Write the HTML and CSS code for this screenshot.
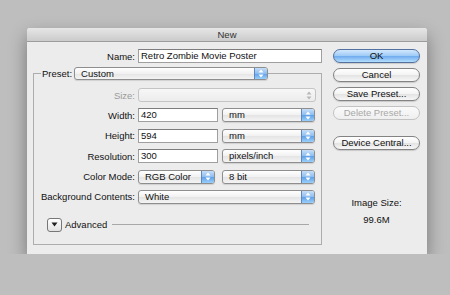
FILE: index.html
```html
<!DOCTYPE html>
<html lang="en">
<head>
    <meta charset="UTF-8">
    <meta name="viewport" content="width=device-width, initial-scale=1.0">
    <title>New</title>
    <link rel="stylesheet" href="styles.css">
</head>
<body>
    <div class="dialog">
        <div class="titlebar">New</div>
        <div class="content">
            <div class="main">
                <div class="row">
                    <span class="lbl">Name:</span>
                    <div class="field w-name">Retro Zombie Movie Poster</div>
                </div>

                <div class="group">
                    <div class="group-head">
                        <span class="head-lbl">Preset:</span>
                        <div class="popup w-preset">
                            <span class="val">Custom</span>
                            <span class="arrows"><svg width="6" height="9" viewBox="0 0 6 9"><path d="M3 0.5 L5.5 3.5 H0.5 Z M3 8.5 L5.5 5.5 H0.5 Z" fill="#fff"/></svg></span>
                        </div>
                    </div>

                    <div class="rows">
                        <div class="row">
                            <span class="lbl dim">Size:</span>
                            <div class="popup disabled w-size">
                                <span class="val"></span>
                                <span class="arrows"><svg width="6" height="9" viewBox="0 0 6 9"><path d="M3 0.5 L5.5 3.5 H0.5 Z M3 8.5 L5.5 5.5 H0.5 Z" fill="#b8b8b8"/></svg></span>
                            </div>
                        </div>
                        <div class="row">
                            <span class="lbl">Width:</span>
                            <div class="field w-num">420</div>
                            <div class="popup w-unit">
                                <span class="val">mm</span>
                                <span class="arrows"><svg width="6" height="9" viewBox="0 0 6 9"><path d="M3 0.5 L5.5 3.5 H0.5 Z M3 8.5 L5.5 5.5 H0.5 Z" fill="#fff"/></svg></span>
                            </div>
                        </div>
                        <div class="row">
                            <span class="lbl">Height:</span>
                            <div class="field w-num">594</div>
                            <div class="popup w-unit">
                                <span class="val">mm</span>
                                <span class="arrows"><svg width="6" height="9" viewBox="0 0 6 9"><path d="M3 0.5 L5.5 3.5 H0.5 Z M3 8.5 L5.5 5.5 H0.5 Z" fill="#fff"/></svg></span>
                            </div>
                        </div>
                        <div class="row">
                            <span class="lbl">Resolution:</span>
                            <div class="field w-num">300</div>
                            <div class="popup w-unit">
                                <span class="val">pixels/inch</span>
                                <span class="arrows"><svg width="6" height="9" viewBox="0 0 6 9"><path d="M3 0.5 L5.5 3.5 H0.5 Z M3 8.5 L5.5 5.5 H0.5 Z" fill="#fff"/></svg></span>
                            </div>
                        </div>
                        <div class="row">
                            <span class="lbl">Color Mode:</span>
                            <div class="popup w-mode">
                                <span class="val">RGB Color</span>
                                <span class="arrows"><svg width="6" height="9" viewBox="0 0 6 9"><path d="M3 0.5 L5.5 3.5 H0.5 Z M3 8.5 L5.5 5.5 H0.5 Z" fill="#fff"/></svg></span>
                            </div>
                            <div class="popup w-unit">
                                <span class="val">8 bit</span>
                                <span class="arrows"><svg width="6" height="9" viewBox="0 0 6 9"><path d="M3 0.5 L5.5 3.5 H0.5 Z M3 8.5 L5.5 5.5 H0.5 Z" fill="#fff"/></svg></span>
                            </div>
                        </div>
                        <div class="row">
                            <span class="lbl">Background Contents:</span>
                            <div class="popup w-bg">
                                <span class="val">White</span>
                                <span class="arrows"><svg width="6" height="9" viewBox="0 0 6 9"><path d="M3 0.5 L5.5 3.5 H0.5 Z M3 8.5 L5.5 5.5 H0.5 Z" fill="#fff"/></svg></span>
                            </div>
                        </div>
                    </div>

                    <div class="advanced">
                        <span class="disclose"><svg width="7" height="5" viewBox="0 0 7 5"><path d="M0.5 0.5 H6.5 L3.5 4.5 Z" fill="#222"/></svg></span>
                        <span class="adv-lbl">Advanced</span>
                        <span class="adv-line"></span>
                    </div>
                </div>
            </div>

            <div class="side">
                <div class="btn default">OK</div>
                <div class="btn">Cancel</div>
                <div class="btn">Save Preset...</div>
                <div class="btn disabled">Delete Preset...</div>
                <div class="btn gap">Device Central...</div>
                <div class="imgsize">
                    <p>Image Size:</p>
                    <p>99.6M</p>
                </div>
            </div>
        </div>
    </div>
</body>
</html>
```

FILE: styles.css
```css
body {
    margin: 0;
    background-color: #bebebe;
    font-family: "Liberation Sans", Arial, sans-serif;
    font-size: 9.5px;
    color: #111;
}
.dialog {
    width: 400px;
    height: 226px;
    margin: 28px 0 0 27px;
    background-color: #ececec;
    box-shadow: 0 8px 18px rgba(0, 0, 0, 0.38);
    border-radius: 3px 3px 0 0;
}
.titlebar {
    height: 13px;
    line-height: 13px;
    text-align: center;
    background: linear-gradient(#e6e6e6, #cbcbcb);
    border-bottom: 1px solid #9c9c9c;
    border-radius: 3px 3px 0 0;
    color: #333;
}
.content {
    display: flex;
    padding: 7px 0 0 6px;
}
.main {
    width: 289px;
}
.row {
    display: flex;
    align-items: center;
    height: 14px;
}
.lbl {
    width: 102px;
    text-align: right;
    margin-right: 3px;
    white-space: nowrap;
}
.group .lbl {
    width: 101px;
}
.dim {
    color: #9a9a9a;
}
.field {
    box-sizing: border-box;
    height: 14px;
    line-height: 12px;
    padding-left: 2px;
    background-color: #fff;
    border: 1px solid #9f9f9f;
    border-top-color: #7d7d7d;
}
.w-name { width: 184px; }
.w-num { width: 80px; margin-right: 4px; }

.popup {
    box-sizing: border-box;
    display: flex;
    height: 14px;
    border: 1px solid #8e8e8e;
    border-radius: 3px;
    background: linear-gradient(#ffffff, #f1f1f1 50%, #e4e4e4 51%, #f4f4f4);
    box-shadow: 0 1px 1px rgba(0, 0, 0, 0.12);
}
.popup .val {
    flex: 1;
    line-height: 12px;
    padding-left: 6px;
}
.popup .arrows {
    width: 12px;
    display: flex;
    align-items: center;
    justify-content: center;
    border-left: 1px solid #5f86bf;
    border-radius: 0 2px 2px 0;
    background: linear-gradient(#c6def8, #8cbdf1 50%, #5e9fe6 51%, #9ad0fb);
}
.popup.disabled {
    border-color: #c4c4c4;
    background: linear-gradient(#f7f7f7, #ececec);
    box-shadow: none;
}
.popup.disabled .arrows {
    background: none;
    border-left: none;
}
.w-preset { width: 194px; height: 13px; }
.w-preset .val { line-height: 11px; }
.w-size { width: 178px; }
.w-unit { width: 93px; }
.w-mode { width: 77px; margin-right: 7px; }
.w-bg { width: 177px; }

.group {
    margin-top: 10px;
    height: 172px;
    border: 1px solid #adadad;
    box-sizing: border-box;
}
.group-head {
    display: flex;
    align-items: center;
    width: fit-content;
    height: 13px;
    margin: -7px 0 0 7px;
    padding: 0 0 0 1px;
    background-color: #ececec;
}
.head-lbl {
    margin-right: 2px;
}
.rows {
    display: flex;
    flex-direction: column;
    gap: 6.4px;
    margin-top: 8px;
}
.advanced {
    display: flex;
    align-items: center;
    margin: 14px 0 0 13px;
    height: 14px;
}
.disclose {
    box-sizing: border-box;
    width: 15px;
    height: 14px;
    display: flex;
    align-items: center;
    justify-content: center;
    border: 1px solid #777;
    border-radius: 3px;
    background: linear-gradient(#ffffff, #e2e2e2);
}
.adv-lbl {
    margin-left: 3px;
}
.adv-line {
    width: 197px;
    height: 1px;
    margin-left: 5px;
    background-color: #a8a8a8;
}

.side {
    margin-left: 11px;
    width: 87px;
    display: flex;
    flex-direction: column;
    gap: 5px;
}
.btn {
    box-sizing: border-box;
    height: 14px;
    line-height: 12px;
    text-align: center;
    border: 1px solid #838383;
    border-radius: 7px;
    background: linear-gradient(#ffffff, #f3f3f3 50%, #e3e3e3 51%, #f7f7f7);
    box-shadow: 0 1px 1px rgba(0, 0, 0, 0.15);
}
.btn.default {
    border-color: #52719f;
    background: linear-gradient(#d3e7fc, #9ccaf6 50%, #6eaaef 51%, #b4defd);
}
.btn.disabled {
    color: #a8a8a8;
    border-color: #c2c2c2;
    box-shadow: none;
    background: linear-gradient(#fafafa, #efefef);
}
.btn.gap {
    margin-top: 11px;
}
.imgsize {
    margin-top: 42px;
    text-align: center;
}
.imgsize p {
    margin: 0 0 6px;
}
```
